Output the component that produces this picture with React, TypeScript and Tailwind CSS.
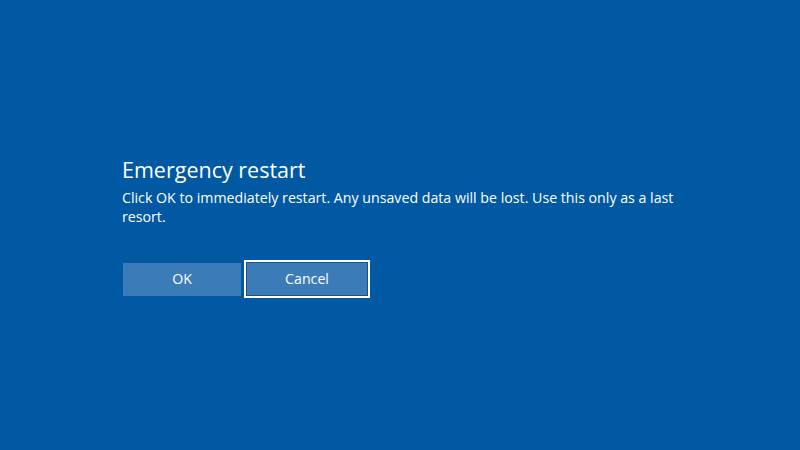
export default function App() {
  return (
    <div
      className="w-[800px] h-[450px] bg-[#0059a2] text-white flex flex-col pl-[122px] pt-[155px]"
      style={{ fontFamily: '"Open Sans", "Noto Sans", sans-serif' }}
    >
      <h1 className="text-[21.5px] leading-[30px] font-normal">Emergency restart</h1>
      <p className="w-[580px] text-[14.2px] leading-[19px] mt-[3px]">
        Click OK to immediately restart. Any unsaved data will be lost. Use this only as a last resort.
      </p>
      <div className="flex items-center gap-[3px] mt-[34px] pl-[1px]">
        <button type="button" className="w-[118px] h-[33px] bg-[#3b7cb8] text-[14.2px]">
          OK
        </button>
        <button
          type="button"
          className="w-[126px] h-[38px] border-2 border-white bg-[#3b7cb8] text-[14.2px] shadow-[inset_0_0_0_1px_#1d4f86]"
        >
          Cancel
        </button>
      </div>
    </div>
  );
}
